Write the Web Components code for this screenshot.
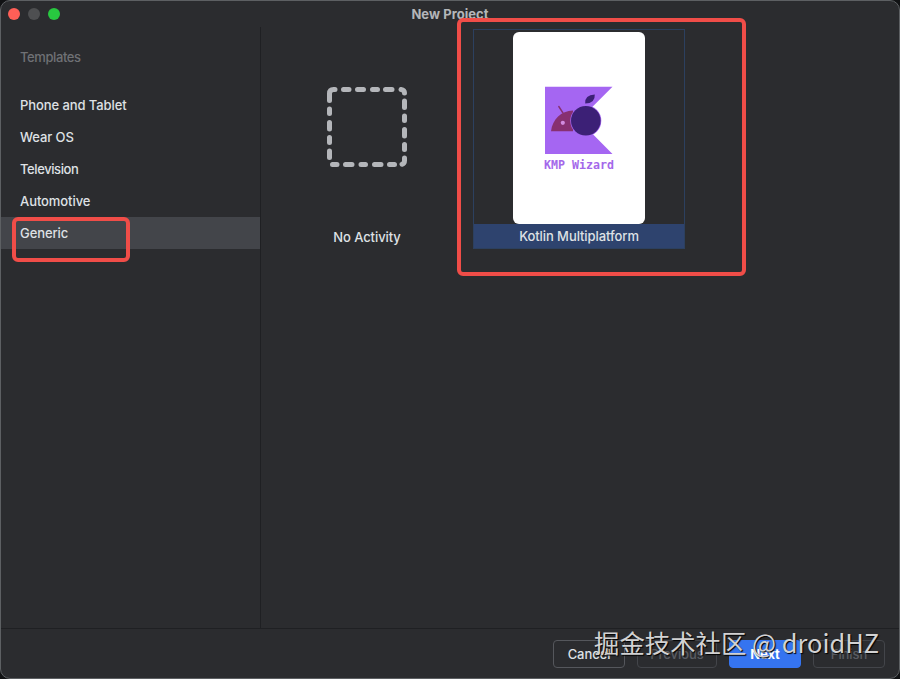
<!DOCTYPE html>
<html lang="en">
<head>
<meta charset="utf-8">
<title>New Project</title>
<style>
  html, body {
    margin: 0;
    height: 100%;
    background: #111214;
    overflow: hidden;
  }
</style>
</head>
<body>
<project-wizard>
  <title-bar slot="title">New Project</title-bar>
  <template-list slot="sidebar" heading="Templates">
    <template-item>Phone and Tablet</template-item>
    <template-item>Wear OS</template-item>
    <template-item style="letter-spacing: -0.4px">Television</template-item>
    <template-item>Automotive</template-item>
    <template-item selected>Generic</template-item>
  </template-list>
  <template-card label="No Activity"><empty-icon></empty-icon></template-card>
  <template-card label="Kotlin Multiplatform" selected><kmp-preview></kmp-preview></template-card>
  <wizard-button slot="footer">Cancel</wizard-button>
  <wizard-button slot="footer" disabled class="wide">Previous</wizard-button>
  <wizard-button slot="footer" primary>Next</wizard-button>
  <wizard-button slot="footer" disabled>Finish</wizard-button>
</project-wizard>
<highlight-box style="left: 12px; top: 217px; width: 118px; height: 45px"></highlight-box>
<highlight-box style="left: 457px; top: 18px; width: 289px; height: 258px"></highlight-box>
<water-mark>掘金技术社区 @ droidHZ</water-mark>

<script>
(function () {
  function define(name, html, setup) {
    const template = document.createElement("template");
    template.innerHTML = html;

    window.customElements.define(
      name,
      class extends HTMLElement {
        constructor() {
          super();
          this.attachShadow({ mode: "open" });
          this.shadowRoot.appendChild(template.content.cloneNode(true));
        }

        connectedCallback() {
          if (setup) setup(this, this.shadowRoot);
        }
      }
    );
  }

  // Window frame: title bar, sidebar + gallery, footer
  define("project-wizard", `
    <style>
      :host {
        box-sizing: border-box;
        display: grid;
        grid-template-rows: 26px 1fr 50px;
        width: 900px;
        height: 679px;
        border: 1px solid #5d6063;
        border-radius: 10px;
        background: #2b2c2f;
        color: #dfe1e5;
        font: 500 13px/16px Inter, sans-serif;
        letter-spacing: -0.08px;
        overflow: hidden;
      }

      .content {
        display: grid;
        grid-template-columns: 260px 1fr;
        min-height: 0;
      }

      .sidebar {
        border-right: 1px solid #1f2023;
      }

      .gallery {
        display: flex;
        align-items: flex-start;
        padding: 2px 0 0;
      }

      .footer {
        box-sizing: border-box;
        display: flex;
        gap: 12px;
        justify-content: flex-end;
        padding: 11px 14px 0 0;
        border-top: 1px solid #1f2023;
      }
    </style>
    <slot name="title"></slot>
    <div class="content">
      <div class="sidebar"><slot name="sidebar"></slot></div>
      <div class="gallery"><slot></slot></div>
    </div>
    <div class="footer"><slot name="footer"></slot></div>
  `);

  define("title-bar", `
    <style>
      :host {
        display: grid;
        grid-template-columns: 1fr auto 1fr;
        align-items: center;
        color: #b4b6b9;
        font-weight: 700;
        letter-spacing: 0.05px;
      }

      .lights {
        display: flex;
        gap: 8px;
        padding-left: 7px;
      }

      i {
        width: 12px;
        height: 12px;
        border-radius: 50%;
        background: #4e4f51;
      }

      i:first-child { background: #ff5f57; }
      i:last-child { background: #28c840; }

      span { padding-bottom: 1px; }
    </style>
    <div class="lights"><i></i><i></i><i></i></div>
    <span><slot></slot></span>
  `);

  define("template-list", `
    <style>
      :host {
        display: block;
        padding-top: 22px;
      }

      .heading {
        margin-bottom: 32px;
        padding-left: 19px;
        color: #6f7175;
        line-height: 17px;
        height: 16px;
        letter-spacing: -0.4px;
      }

      .items {
        margin-top: -8px;
      }
    </style>
    <div class="heading"></div>
    <div class="items"><slot></slot></div>
  `, (host, root) => {
    root.querySelector(".heading").textContent = host.getAttribute("heading");
  });

  define("template-item", `
    <style>
      :host {
        display: block;
        padding-left: 19px;
        line-height: 32px;
      }

      :host([selected]) {
        background: #43454a;
      }
    </style>
    <slot></slot>
  `);

  define("template-card", `
    <style>
      :host {
        box-sizing: border-box;
        display: flex;
        flex-direction: column;
        width: 212px;
        height: 220px;
        border: 1px solid transparent;
      }

      .picture {
        display: flex;
        flex: 1;
        justify-content: center;
        align-items: center;
      }

      .label {
        height: 24px;
        line-height: 24px;
        text-align: center;
      }

      :host([selected]) {
        border-color: #2c405f;
      }

      :host([selected]) .label {
        background: #2e436e;
      }

      :host(:not([selected])) .label {
        padding-top: 1px;
        height: 23px;
      }
    </style>
    <div class="picture"><slot></slot></div>
    <div class="label"></div>
  `, (host, root) => {
    root.querySelector(".label").textContent = host.getAttribute("label");
  });

  define("empty-icon", `
    <style>
      :host {
        display: block;
        width: 80px;
        height: 80px;
      }

      svg { display: block; }
    </style>
    <svg width="80" height="80" fill="none" stroke="#b4b6ba" stroke-width="5" stroke-linecap="round" stroke-linejoin="round">
      <path d="M8 2.5H6.5Q2.5 2.5 2.5 6.5V13.5M16.5 2.5H22M30.5 2.5H36.5M45.5 2.5H50.5M58.5 2.5H65M74 2.5Q77.5 3 77.5 6"/>
      <path d="M77.5 14V20.5M77.5 29V33.5M77.5 42.5V49M77.5 57.5V62.5M77.5 71V73.5Q77.5 76.5 75 77.3"/>
      <path d="M5.5 77.5H10M18.5 77.5H25M34 77.5H38.5M47.5 77.5H54M62.5 77.5H67.5"/>
      <path d="M2.5 22V26.5M2.5 35.5V42M2.5 50.5V55.5M2.5 64V70.5"/>
    </svg>
  `);

  define("kmp-preview", `
    <style>
      :host {
        display: flex;
        flex-direction: column;
        align-items: center;
        box-sizing: border-box;
        width: 132px;
        height: 192px;
        margin-top: 1px;
        padding-top: 54px;
        border-radius: 6px;
        background: #fff;
        color: #a468ea;
      }

      svg { display: block; }

      span {
        margin-top: 3px;
        font: 700 11.6px/16px "DejaVu Sans Mono", monospace;
        letter-spacing: 0;
      }
    </style>
    <svg width="68" height="68" viewBox="0 0 68 68">
      <path fill="#a566f2" d="M0 .8H67.5L34 34.2L67.5 68H0z"/>
      <g fill="#873071">
        <path d="M6 45.2C7.5 33 16 25 28 24.5V45.2z"/>
        <path d="M13.8 20.5L18 27" stroke="#873071" stroke-width="1.4" stroke-linecap="round"/>
      </g>
      <circle cx="17.8" cy="36.8" r="2.1" fill="#d28ce0"/>
      <circle cx="40.8" cy="34.8" r="15.5" fill="#a566f2"/>
      <circle cx="40.8" cy="34.8" r="14.8" fill="#3c2076"/>
      <path fill="#3c2076" d="M40.2 17.5Q39.5 9 49.8 8.5Q50.3 17.5 40.2 17.5z"/>
    </svg>
    <span>KMP Wizard</span>
  `);

  define("wizard-button", `
    <style>
      :host {
        box-sizing: border-box;
        width: 72px;
        height: 28px;
        border: 1px solid #55575c;
        border-radius: 4px;
        line-height: 26px;
        text-align: center;
      }

      :host(.wide) {
        width: 80px;
      }

      :host([disabled]) {
        border-color: #43454a;
        color: #5a5d63;
      }

      :host([primary]) {
        border-color: #3574f0;
        background: #3574f0;
        color: #fff;
        font-weight: 700;
      }
    </style>
    <slot></slot>
  `);

  // Red marker drawn over the window
  define("highlight-box", `
    <style>
      :host {
        position: absolute;
        box-sizing: border-box;
        border: 4px solid #f04d48;
        border-radius: 6px;
      }
    </style>
  `);

  define("water-mark", `
    <style>
      :host {
        position: absolute;
        right: 21px;
        bottom: 19px;
        color: #d2d2d3;
        font: 400 25.4px/36px "Noto Sans CJK SC", sans-serif;
        white-space: nowrap;
        text-shadow: 1px 1px 1px #000;
      }
    </style>
    <slot></slot>
  `);
})();
</script>
</body>
</html>
